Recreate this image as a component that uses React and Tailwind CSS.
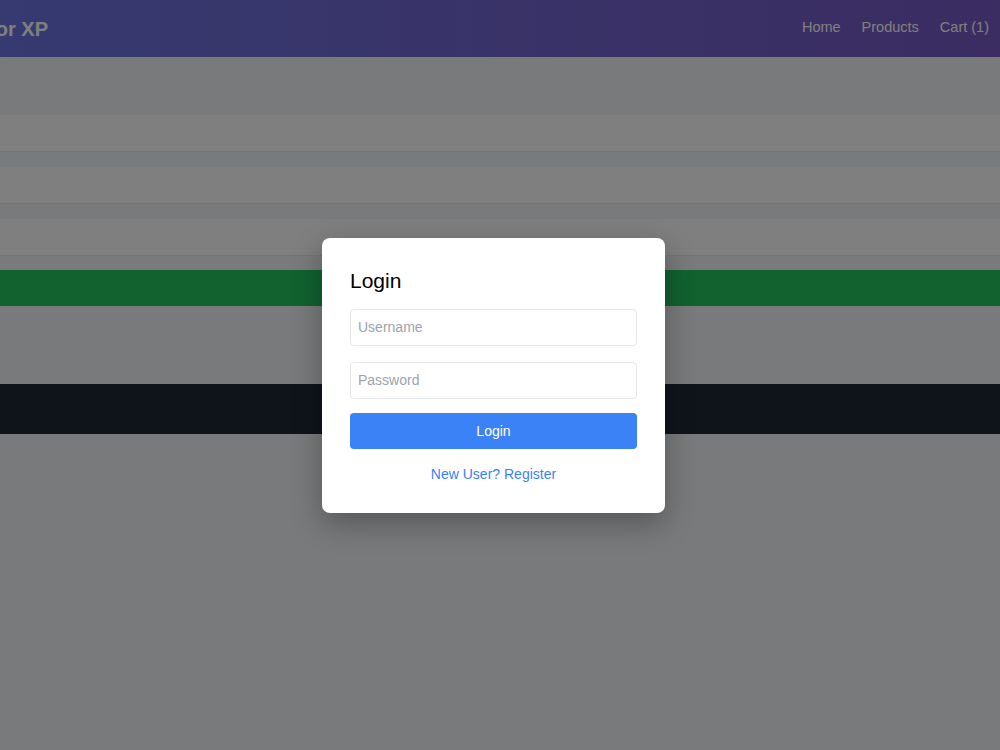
import { useState } from 'react';

const font = { fontFamily: '"Liberation Sans", Arial, sans-serif' };

function Header() {
  return (
    <header className="h-[57px] flex items-center justify-between bg-[#6c74e0] bg-linear-to-r from-[#6c74e0] to-[#7659c4]">
      <div className="ml-[-52px] text-xl font-bold text-white whitespace-nowrap">Vendor XP</div>
      <nav className="flex items-center gap-[21px] pr-[11px] pb-[2px] text-[14.5px] text-white">
        <a href="#">Home</a>
        <a href="#">Products</a>
        <a href="#">Cart (1)</a>
      </nav>
    </header>
  );
}

function CartPage() {
  const rows = [1, 2, 3];
  return (
    <main className="pt-[58px]">
      <div className="flex flex-col gap-[15px]">
        {rows.map(r => (
          <div key={r} className="h-[37px] bg-white border-b border-[#e5e7eb]" />
        ))}
      </div>
      <div className="mt-[14px] h-[36px] bg-[#22c55e]" />
      <div className="mt-[78px] h-[50px] bg-[#1f2937]" />
    </main>
  );
}

function LoginModal() {
  const [username, setUsername] = useState('');
  const [password, setPassword] = useState('');

  return (
    <div className="absolute inset-0 z-20 bg-[rgba(0,0,0,0.5)] flex items-center justify-center pr-[13px]">
      <div className="w-[343px] bg-white rounded-lg shadow-[0_10px_30px_rgba(0,0,0,0.3)] px-7 pt-7 pb-[29px]">
        <h2 className="text-[21px] leading-[29px] text-black mb-[14px]">Login</h2>
        <div className="flex flex-col gap-[16px]">
          <input
            value={username}
            onChange={e => setUsername(e.target.value)}
            placeholder="Username"
            className="h-[37px] w-full px-[7px] border border-[#e5e7eb] rounded-sm text-sm placeholder:text-[#9ca3af] outline-none"
          />
          <input
            type="password"
            value={password}
            onChange={e => setPassword(e.target.value)}
            placeholder="Password"
            className="h-[37px] w-full px-[7px] border border-[#e5e7eb] rounded-sm text-sm placeholder:text-[#9ca3af] outline-none"
          />
        </div>
        <button className="mt-[14px] h-[36px] w-full bg-[#3b82f6] text-white text-sm rounded">
          Login
        </button>
        <div className="mt-[15px] text-center text-sm leading-5">
          <a href="#" className="text-[#3b82f6]">New User? Register</a>
        </div>
      </div>
    </div>
  );
}

export default function App() {
  return (
    <div className="relative h-[750px] bg-[#f3f4f6] overflow-hidden" style={font}>
      <Header />
      <CartPage />
      <LoginModal />
    </div>
  );
}
